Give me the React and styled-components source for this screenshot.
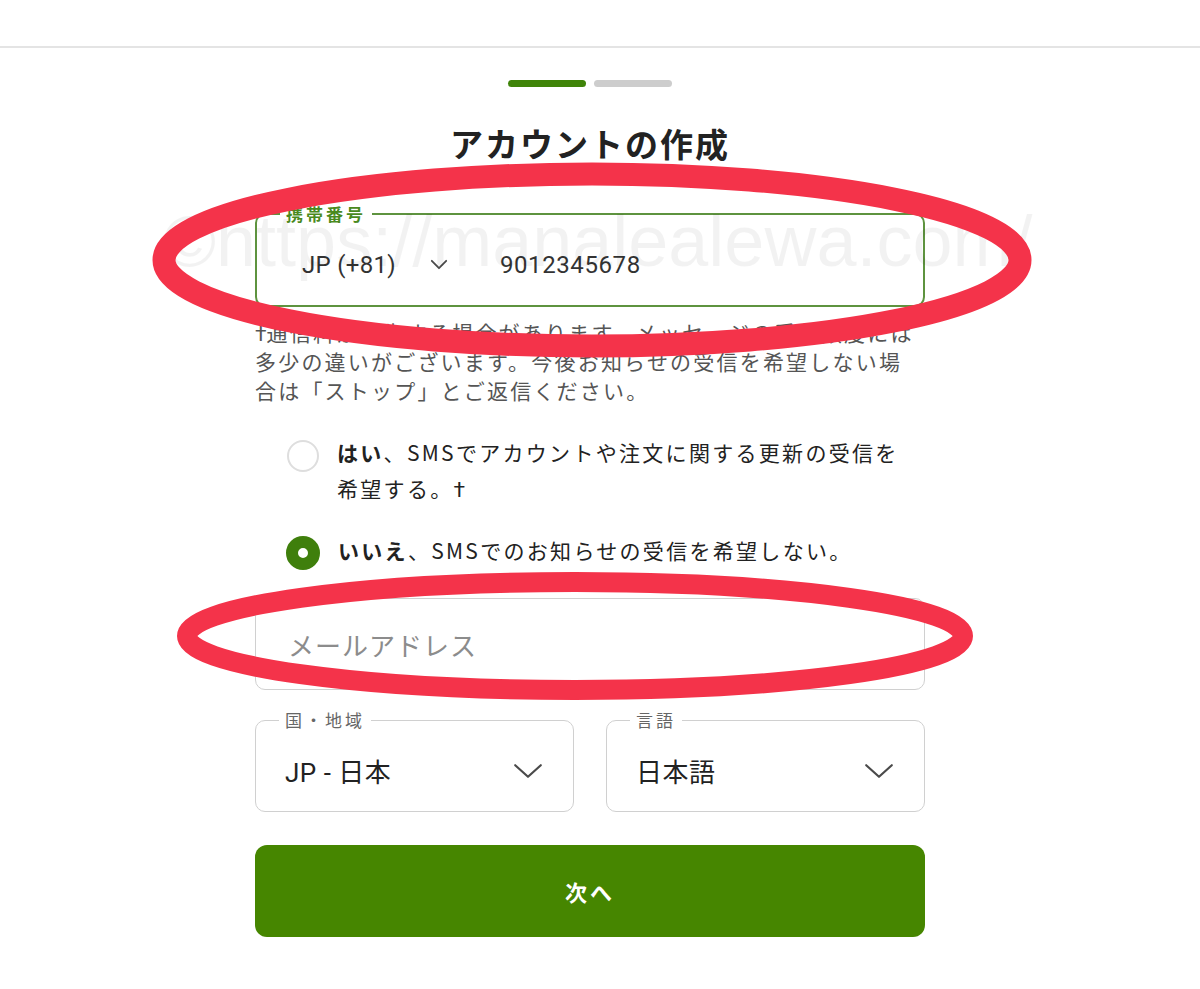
import styled, { createGlobalStyle } from "styled-components";

const GlobalStyle = createGlobalStyle`
  html, body {
    margin: 0;
    background: #fff;
  }
  body {
    font-family: "Noto Sans CJK JP", "Noto Sans", sans-serif;
    color: #222;
  }
`;

function Chevron({ w = 30, h = 16, stroke = 2.2 }) {
  return (
    <svg width={w} height={h} viewBox={`0 0 ${w} ${h}`} fill="none">
      <path
        d={`M${stroke} ${stroke} L${w / 2} ${h - stroke} L${w - stroke} ${stroke}`}
        stroke="#4a4a4a"
        strokeWidth={stroke}
        strokeLinecap="round"
        strokeLinejoin="round"
      />
    </svg>
  );
}

function App() {
  return (
    <>
      <GlobalStyle />
      <Page>
        <Header />
        <Main>
          <Steps>
            <Step $done />
            <Step />
          </Steps>
          <Title>アカウントの作成</Title>

          <PhoneField $active>
            <Legend $active>携帯番号</Legend>
            <PhoneRow>
              <Code>JP (+81)</Code>
              <SmallChevron>
                <Chevron w={18} h={11} stroke={1.8} />
              </SmallChevron>
              <Number>9012345678</Number>
            </PhoneRow>
          </PhoneField>

          <Helper>
            <Dagger>†</Dagger>通信料が発生する場合があります。メッセージの受信頻度には
            <br />
            多少の違いがございます。今後お知らせの受信を希望しない場
            <br />
            合は「ストップ」とご返信ください。
          </Helper>

          <Options>
            <Option>
              <Radio />
              <OptionText>
                <b>はい</b>、SMSでアカウントや注文に関する更新の受信を
                <br />
                希望する。<Dagger>†</Dagger>
              </OptionText>
            </Option>
            <Option $gap>
              <Radio $checked />
              <OptionText>
                <b>いいえ</b>、SMSでのお知らせの受信を希望しない。
              </OptionText>
            </Option>
          </Options>

          <EmailBox>
            <Placeholder>メールアドレス</Placeholder>
          </EmailBox>

          <SelectRow>
            <Field>
              <Legend>国・地域</Legend>
              <SelectValue>
                <span>JP - 日本</span>
                <Chevron />
              </SelectValue>
            </Field>
            <Field>
              <Legend>言語</Legend>
              <SelectValue>
                <span>日本語</span>
                <Chevron />
              </SelectValue>
            </Field>
          </SelectRow>

          <NextButton>次へ</NextButton>
        </Main>

        <Marks width="1200" height="989" viewBox="0 0 1200 989">
          <text
            x="163"
            y="266"
            fontFamily="Liberation Sans, Arial, sans-serif"
            fontSize="72"
            fill="rgba(0,0,0,0.05)"
          >
            ©https://manalealewa.com/
          </text>
          <ellipse
            cx="592"
            cy="260"
            rx="428"
            ry="86"
            fill="none"
            stroke="#f4334a"
            strokeWidth="23"
          />
          <ellipse
            cx="575"
            cy="636"
            rx="388"
            ry="54"
            fill="none"
            stroke="#f4334a"
            strokeWidth="20"
          />
        </Marks>
      </Page>
    </>
  );
}

const Page = styled.div`
  position: relative;
  min-height: 989px;
  padding-right: 20px;
  overflow: hidden;
`;

const Header = styled.div`
  height: 46px;
  margin-right: -20px;
  border-bottom: 2px solid #e4e4e4;
`;

const Main = styled.main`
  width: 670px;
  margin: 0 auto;
  display: flex;
  flex-direction: column;
`;

const Steps = styled.div`
  margin-top: 32px;
  display: flex;
  justify-content: center;
  gap: 8px;
`;

const Step = styled.div`
  width: 78px;
  height: 7px;
  border-radius: 4px;
  background: ${(p) => (p.$done ? "#3f8409" : "#cdcdcd")};
`;

const Title = styled.h1`
  margin: 36px 0 0;
  text-align: center;
  font-size: 33px;
  line-height: 40px;
  font-weight: 700;
  letter-spacing: 2px;
  color: #222;
`;

const Field = styled.fieldset`
  margin: 0;
  padding: 0;
  min-width: 0;
  border: ${(p) => (p.$active ? "2px solid #5e933f" : "1.5px solid #d0d0d0")};
  border-radius: 10px;
`;

const PhoneField = styled(Field)`
  margin-top: 41px;
`;

const Legend = styled.legend`
  margin-left: 23px;
  padding: 0 6px;
  font-size: 17px;
  line-height: 20px;
  letter-spacing: 3px;
  font-weight: ${(p) => (p.$active ? 700 : 400)};
  color: ${(p) => (p.$active ? "#4a8a1e" : "#666")};
`;

const PhoneRow = styled.div`
  height: 81px;
  display: flex;
  align-items: center;
  padding-left: 45px;
  font-family: Roboto, "Noto Sans", sans-serif;
  font-size: 24px;
  color: #333;
`;

const Code = styled.span`
  letter-spacing: 0.3px;
`;

const SmallChevron = styled.span`
  display: flex;
  margin-left: 34px;
`;

const Number = styled.span`
  margin-left: 52px;
  letter-spacing: 0.6px;
`;

const Dagger = styled.span`
  font-family: Roboto, sans-serif;
  letter-spacing: 0;
  line-height: 0;
`;

const Helper = styled.p`
  margin: 11px 0 0;
  font-size: 21px;
  line-height: 29px;
  letter-spacing: 2.2px;
  color: #555;
`;

const Options = styled.div`
  margin-top: 29px;
  display: flex;
  flex-direction: column;
`;

const Option = styled.div`
  display: flex;
  align-items: flex-start;
  gap: 18px;
  padding-left: 32px;
  margin-top: ${(p) => (p.$gap ? "26px" : "0")};
`;

const Radio = styled.span`
  flex: none;
  box-sizing: border-box;
  width: ${(p) => (p.$checked ? "34px" : "32px")};
  height: ${(p) => (p.$checked ? "34px" : "32px")};
  margin-top: ${(p) => (p.$checked ? "4px" : "6px")};
  margin-left: ${(p) => (p.$checked ? "-1px" : "0")};
  border-radius: 50%;
  border: ${(p) => (p.$checked ? "12px solid #3f7f0c" : "2px solid #dedede")};
  background: #fff;
`;

const OptionText = styled.span`
  font-size: 21px;
  line-height: 36px;
  letter-spacing: 2.3px;
  color: #222;

  b {
    font-weight: 700;
  }
`;

const EmailBox = styled.div`
  margin-top: 28px;
  height: 92px;
  box-sizing: border-box;
  border: 1.5px solid #d0d0d0;
  border-radius: 10px;
  display: flex;
  align-items: center;
  padding-left: 32px;
`;

const Placeholder = styled.span`
  font-size: 26px;
  letter-spacing: 1px;
  color: #8c8c8c;
`;

const SelectRow = styled.div`
  margin-top: 20px;
  display: grid;
  grid-template-columns: 1fr 1fr;
  gap: 32px;
`;

const SelectValue = styled.div`
  height: 81px;
  display: flex;
  align-items: center;
  justify-content: space-between;
  padding: 0 30px 0 29px;
  font-size: 26px;
  color: #222;

  span {
    font-family: Roboto, "Noto Sans CJK JP", sans-serif;
    letter-spacing: 0.5px;
  }
`;

const NextButton = styled.button`
  margin-top: 33px;
  height: 92px;
  border: none;
  border-radius: 12px;
  background: #468600;
  color: #fff;
  font-family: "Noto Sans CJK JP", sans-serif;
  font-size: 22px;
  font-weight: 700;
  letter-spacing: 3px;
  cursor: pointer;
`;

const Marks = styled.svg`
  position: absolute;
  top: 0;
  left: 0;
  pointer-events: none;
`;

export default App;
